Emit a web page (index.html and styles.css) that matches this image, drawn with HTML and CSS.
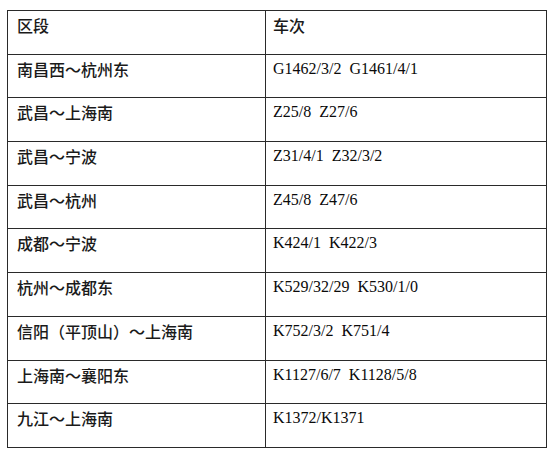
FILE: index.html
```html
<!DOCTYPE html>
<html lang="zh-CN">
<head>
<meta charset="utf-8">
<title>区段 车次</title>
<link rel="stylesheet" href="styles.css">
</head>
<body>
<table class="trains">
  <colgroup><col class="c-seg"><col class="c-no"></colgroup>
  <tr><td class="zh">区段</td><td class="zh">车次</td></tr>
  <tr><td class="zh">南昌西～杭州东</td><td>G1462/3/2&nbsp;&nbsp;G1461/4/1</td></tr>
  <tr><td class="zh">武昌～上海南</td><td>Z25/8&nbsp;&nbsp;Z27/6</td></tr>
  <tr><td class="zh">武昌～宁波</td><td>Z31/4/1&nbsp;&nbsp;Z32/3/2</td></tr>
  <tr><td class="zh">武昌～杭州</td><td>Z45/8&nbsp;&nbsp;Z47/6</td></tr>
  <tr><td class="zh">成都～宁波</td><td>K424/1&nbsp;&nbsp;K422/3</td></tr>
  <tr><td class="zh">杭州～成都东</td><td>K529/32/29&nbsp;&nbsp;K530/1/0</td></tr>
  <tr><td class="zh">信阳（平顶山）～上海南</td><td>K752/3/2&nbsp;&nbsp;K751/4</td></tr>
  <tr><td class="zh">上海南～襄阳东</td><td>K1127/6/7&nbsp;&nbsp;K1128/5/8</td></tr>
  <tr><td class="zh">九江～上海南</td><td>K1372/K1371</td></tr>
</table>
</body>
</html>
```
FILE: styles.css
```css
html, body {
  margin: 0;
  background: #ffffff;
}
body {
  padding: 10px 0 0 7px;
  font-family: "Liberation Serif", "Noto Sans CJK SC", serif;
  font-size: 16px;
  color: #0a0a0a;
}
.trains {
  border-collapse: collapse;
  width: 539px;
  table-layout: fixed;
}
.c-seg { width: 258px; }
.c-no { width: 281px; }
.trains tr {
  height: 43.7px;
}
.trains td {
  border: 1.5px solid #2a2a2a;
  vertical-align: top;
  padding: 4px 8px 0 9px;
  line-height: 20px;
  white-space: nowrap;
}
.trains td + td {
  padding-left: 7px;
}
.trains td.zh {
  font-family: "Noto Sans CJK SC", sans-serif;
  font-weight: 500;
  color: #1a1a1a;
}
```
